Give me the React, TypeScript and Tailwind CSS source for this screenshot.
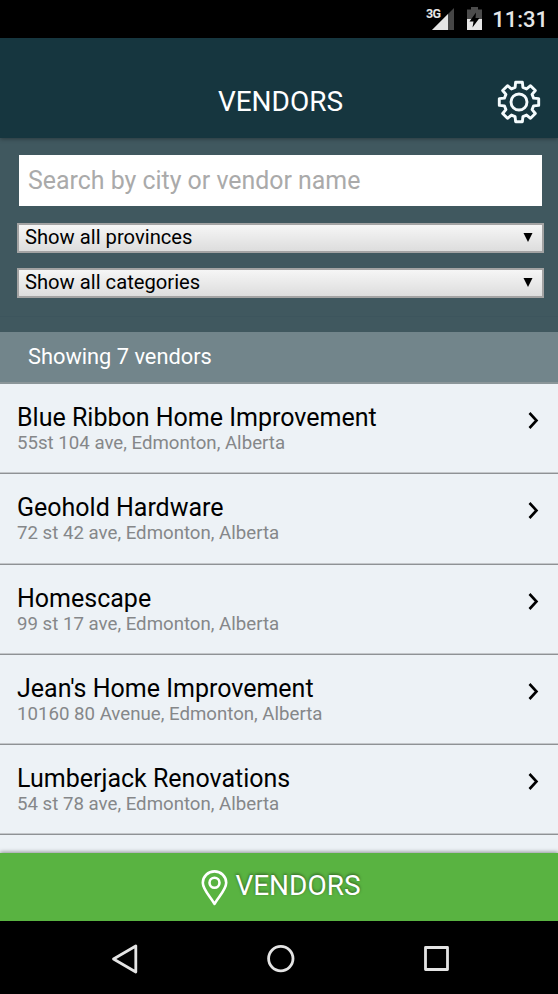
const vendors = [
  { name: "Blue Ribbon Home Improvement", address: "55st 104 ave, Edmonton, Alberta" },
  { name: "Geohold Hardware", address: "72 st 42 ave, Edmonton, Alberta" },
  { name: "Homescape", address: "99 st 17 ave, Edmonton, Alberta" },
  { name: "Jean's Home Improvement", address: "10160 80 Avenue, Edmonton, Alberta" },
  { name: "Lumberjack Renovations", address: "54 st 78 ave, Edmonton, Alberta" },
];

// Outline of an eight-toothed gear centred on the origin.
const gearPoints = Array.from({ length: 8 }, (_, i) => {
  const a = (i * Math.PI) / 4;
  const corners = [
    [-3.9, -14.6],
    [-3.4, -19.7],
    [3.4, -19.7],
    [3.9, -14.6],
  ];
  return corners
    .map(([x, y]) => `${(x * Math.cos(a) - y * Math.sin(a)).toFixed(2)},${(x * Math.sin(a) + y * Math.cos(a)).toFixed(2)}`)
    .join(" ");
}).join(" ");

function StatusBar() {
  return (
    <div className="flex h-[38px] shrink-0 items-start justify-end bg-black pr-[10px] text-[#e6e6e6]">
      <span className="mt-[7px] text-[12.5px] leading-[14px] font-bold tracking-[-0.8px]">3G</span>
      <svg className="-ml-[8px] mt-[8px]" width="22" height="22" viewBox="0 0 22 22">
        <path d="M22 0V22H0Z" fill="#454545" />
        <path d="M16 6V22H0Z" fill="#e6e6e6" />
      </svg>
      <svg className="ml-[13px] mt-[7px]" width="15" height="23" viewBox="0 0 15 23">
        <path d="M4 0h7v2.5h4V12H0V2.5h4Z" fill="#4c4c4c" />
        <path d="M0 12h15v11H0Z" fill="#e6e6e6" />
        <path d="M9 5.5 2.5 14.5H6.5L5.5 20.5 12.5 11H8.5Z" fill="#000" />
      </svg>
      <span className="ml-[10px] mt-[7px] text-[22px] leading-[26px] font-medium">11:31</span>
    </div>
  );
}

function Header() {
  return (
    <header className="relative z-10 grid h-[100px] shrink-0 grid-cols-[1fr_auto_1fr] items-center bg-[#16363f] pt-[27px] pl-[3px] shadow-[0_1px_4px_rgba(0,0,0,0.35)]">
      <span />
      <h1 className="text-[28px] leading-[32px] text-white">VENDORS</h1>
      <svg className="mr-[17px] justify-self-end" width="44" height="44" viewBox="-22 -22 44 44" fill="none" stroke="#f4fbfd" strokeWidth="2.9">
        <polygon points={gearPoints} strokeLinejoin="round" />
        <circle r="8" />
      </svg>
    </header>
  );
}

function Select({ label }: { label: string }) {
  return (
    <div className="flex h-[30px] items-center justify-between border-2 border-[#a3a3a3] bg-linear-to-b from-[#f6f6f6] to-[#dddddd] pr-[9px] pb-[2px] pl-[6px] text-[20.2px] leading-[24px] text-black">
      <span>{label}</span>
      <svg width="10" height="10" viewBox="0 0 10 10">
        <path d="M0.5 1H9.5L5 10Z" fill="#000" />
      </svg>
    </div>
  );
}

export default function App() {
  return (
    <div className="flex h-[994px] w-[558px] flex-col overflow-hidden bg-[#edf2f6] font-[Roboto,sans-serif]">
      <StatusBar />
      <Header />
      <section className="flex h-[179px] shrink-0 flex-col border-b border-[#3d555d] bg-[#40585f] pt-[17px] pr-[14px] pl-[17px]">
        <div className="mx-[2px] flex h-[51px] shrink-0 items-center bg-white px-[9px] text-[24.9px] leading-[30px] text-[#aaaaaa]">
          Search by city or vendor name
        </div>
        <div className="mt-[17px] flex flex-col gap-[15px]">
          <Select label="Show all provinces" />
          <Select label="Show all categories" />
        </div>
      </section>
      <div className="h-[15px] shrink-0 bg-[#40585f]" />
      <div className="flex h-[52px] shrink-0 items-center border-b-2 border-[#8b9699] bg-[#72858b] pl-[28px] text-[21.8px] leading-[26px] text-white">
        Showing 7 vendors
      </div>
      <ul className="min-h-0 flex-1 overflow-hidden">
        {vendors.map((v) => (
          <li key={v.name} className="flex h-[90.25px] justify-between border-b border-[#8f9295] pr-[19px] pl-[17px] shadow-[inset_0_-1px_0_#c4c7ca]">
            <div className="pt-[19px]">
              <div className="text-[25px] leading-[30px] text-black">{v.name}</div>
              <div className="-mt-px text-[18.66px] leading-[22px] text-[#858789]">{v.address}</div>
            </div>
            <svg className="mt-[28px]" width="12" height="18" viewBox="0 0 12 18" fill="none" stroke="#000" strokeWidth="2.6">
              <path d="M2.5 1 9.5 8.5 2.5 16" />
            </svg>
          </li>
        ))}
      </ul>
      <div className="relative z-10 flex h-[68px] shrink-0 items-center justify-center gap-[7px] bg-[#59b341] pl-[4px] text-white shadow-[0_-1px_4px_rgba(0,0,0,0.4)]">
        <svg className="mt-px" width="27" height="36" viewBox="0 0 27 36" fill="none" stroke="#fff" strokeWidth="2.6" strokeLinejoin="round">
          <path d="M13.5 34C10.5 28 1.8 20 1.8 12.8A11.7 11.4 0 0 1 25.2 12.8C25.2 20 16.5 28 13.5 34Z" />
          <circle cx="13.5" cy="12.8" r="5" />
        </svg>
        <span className="pb-[3px] text-[28px] leading-[32px] [text-shadow:0_-1px_3px_rgba(0,0,0,0.5)]">VENDORS</span>
      </div>
      <nav className="flex h-[73px] shrink-0 items-center justify-between bg-black pt-[2px] pr-[107px] pl-[110px]">
        <svg width="30" height="30" viewBox="0 0 30 30" fill="none" stroke="#e4e4e4" strokeWidth="2.8" strokeLinejoin="round">
          <path d="M25.8 2V28L3.5 15Z" />
        </svg>
        <svg width="30" height="30" viewBox="0 0 30 30" fill="none" stroke="#e4e4e4" strokeWidth="2.8">
          <circle cx="14.8" cy="14.6" r="12.2" />
        </svg>
        <svg width="30" height="30" viewBox="0 0 30 30" fill="none" stroke="#e4e4e4" strokeWidth="2.8" strokeLinejoin="round">
          <path d="M4.5 3.5H26.5V25.5H4.5Z" />
        </svg>
      </nav>
    </div>
  );
}
